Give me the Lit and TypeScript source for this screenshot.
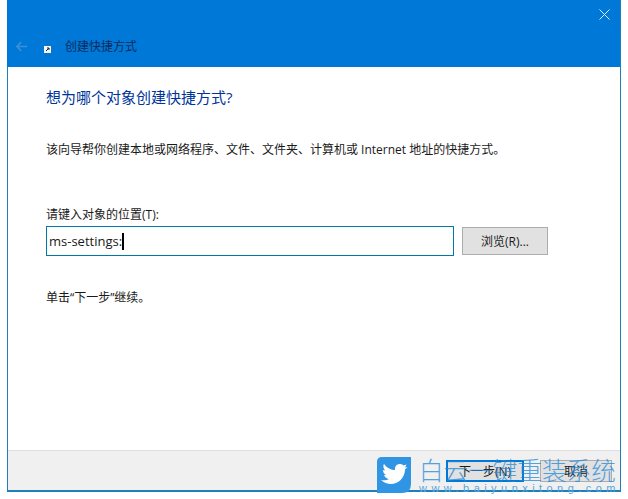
import { LitElement, html, css } from "lit";
import { customElement } from "lit/decorators.js";

@customElement("app-root")
export class AppRoot extends LitElement {
  static styles = css`
    :host {
      display: block;
      width: 628px;
      height: 499px;
      position: relative;
      overflow: hidden;
      background: #fff;
      font-family: "Open Sans", "Noto Sans CJK SC", sans-serif;
      color: #1a1a1a;
      font-size: 12px;
    }
    .window {
      width: 614px;
      height: 492px;
      margin-left: 7px;
      box-sizing: border-box;
      border-left: 1px solid #1f7fb8;
      border-right: 1px solid #1f7fb8;
      border-bottom: 2px solid #1f7fb8;
      display: flex;
      flex-direction: column;
    }
    .head {
      height: 67px;
      flex: none;
      background: #0078d7;
      display: flex;
      flex-direction: column;
      margin: 0 0 0 -1px;
    }
    .close {
      display: flex;
      justify-content: flex-end;
      padding: 9px 10px 0 0;
      height: 11px;
    }
    .titlebar {
      display: flex;
      align-items: center;
      margin-top: 14px;
      height: 24px;
      padding-left: 9px;
    }
    .back { width: 12px; height: 11px; }
    .appicon { width: 7px; height: 7px; margin: 6px 0 0 16px; }
    .title { margin-left: 14px; color: #0c2c5c; font-size: 12px; }
    .body {
      flex: 1;
      padding: 20px 38px 0 38px;
    }
    h1 {
      margin: 0;
      font-weight: 400;
      font-size: 15px;
      line-height: 20px;
      color: #003399;
    }
    .desc { margin: 34px 0 0; line-height: 18px; font-size: 12px; }
    .label { margin: 47px 0 0; line-height: 18px; font-size: 12px; }
    .row { display: flex; gap: 8px; margin-top: 2px; align-items: center; }
    .input {
      width: 408px;
      height: 30px;
      box-sizing: border-box;
      border: 1px solid #0078a8;
      display: flex;
      align-items: center;
      padding-left: 2px;
      font-size: 13px;
    }
    .caret { width: 2px; height: 17px; background: #000; }
    .btn {
      box-sizing: border-box;
      background: #e1e1e1;
      border: 1px solid #adadad;
      display: flex;
      align-items: center;
      justify-content: center;
      font-size: 12px;
    }
    .browse { width: 86px; height: 28px; }
    .hint { margin: 33px 0 0; line-height: 18px; font-size: 12px; }
    .foot {
      height: 40px;
      flex: none;
      background: #f0f0f0;
      border-top: 1px solid #dfdfdf;
      box-sizing: border-box;
      display: flex;
      justify-content: flex-end;
      gap: 16px;
      padding: 9px 8px 0 0;
    }
    .foot .btn { height: 22px; width: 72px; }
    .foot .next { width: 78px; border: 2px solid #0078d7; }
    .mark {
      position: absolute;
      left: 375px;
      top: 456px;
      width: 253px;
      height: 43px;
      display: flex;
      gap: 6px;
    }
    .bird { width: 38px; height: 38px; flex: none; }
    .marktext { display: flex; flex-direction: column; color: #1e88d8; }
    .cn { font-size: 24.6px; line-height: 27px; font-weight: 300; white-space: nowrap; opacity: .75; font-family: "Noto Sans CJK SC", sans-serif; }
    .url {
      font-family: "Liberation Sans", sans-serif;
      font-size: 11px;
      line-height: 11px;
      letter-spacing: 4.45px;
      white-space: nowrap;
      color: #5aa5dc;
    }
  `;

  render() {
    return html`
      <div class="window">
        <div class="head">
          <div class="close">
            <svg width="11" height="11" viewBox="0 0 11 11"><path d="M.5.5l10 10M10.5.5l-10 10" stroke="#dff0ff" stroke-width="1" fill="none"/></svg>
          </div>
          <div class="titlebar">
            <svg class="back" viewBox="0 0 14 12"><path d="M6 1L1 6l5 5M1 6h12" stroke="#3a90d8" stroke-width="2" fill="none"/></svg>
            <svg class="appicon" viewBox="0 0 7 7"><rect width="7" height="7" fill="#f4f4f4"/><path d="M2 5l3-3M3 2h2v2" stroke="#223" stroke-width="1" fill="none"/></svg>
            <span class="title">创建快捷方式</span>
          </div>
        </div>
        <div class="body">
          <h1>想为哪个对象创建快捷方式?</h1>
          <p class="desc">该向导帮你创建本地或网络程序、文件、文件夹、计算机或 Internet 地址的快捷方式。</p>
          <p class="label">请键入对象的位置(T):</p>
          <div class="row">
            <div class="input">ms-settings:<span class="caret"></span></div>
            <div class="btn browse">浏览(R)...</div>
          </div>
          <p class="hint">单击“下一步”继续。</p>
        </div>
        <div class="foot">
          <div class="btn next">下一步(N)</div>
          <div class="btn">取消</div>
        </div>
      </div>
      <div class="mark">
        <svg class="bird" viewBox="0 0 36 38">
          <path d="M6 1h29v27q0 9-9 9H1V6q0-5 5-5z" fill="#2f95e4"/>
          <path d="M5 24c3 .5 6 .3 8-1-3-.5-4-2-5-4h2c-2-1-3-3-3-5l2 .5C7 12 7 9 8 8c3 4 7 6 11 6-.5-4 2-6 5-6 1.500 0 2.500.5 3.500 1.500l3-1-1.500 3 2.500-.5-2.500 2.500C29 22 22 28 15 28c-4 0-7-1.500-10-4z" fill="#fff"/>
        </svg>
        <div class="marktext">
          <div class="cn">白云一键重装系统</div>
          <div class="url">www.baiyunxitong.com</div>
        </div>
      </div>
    `;
  }
}
